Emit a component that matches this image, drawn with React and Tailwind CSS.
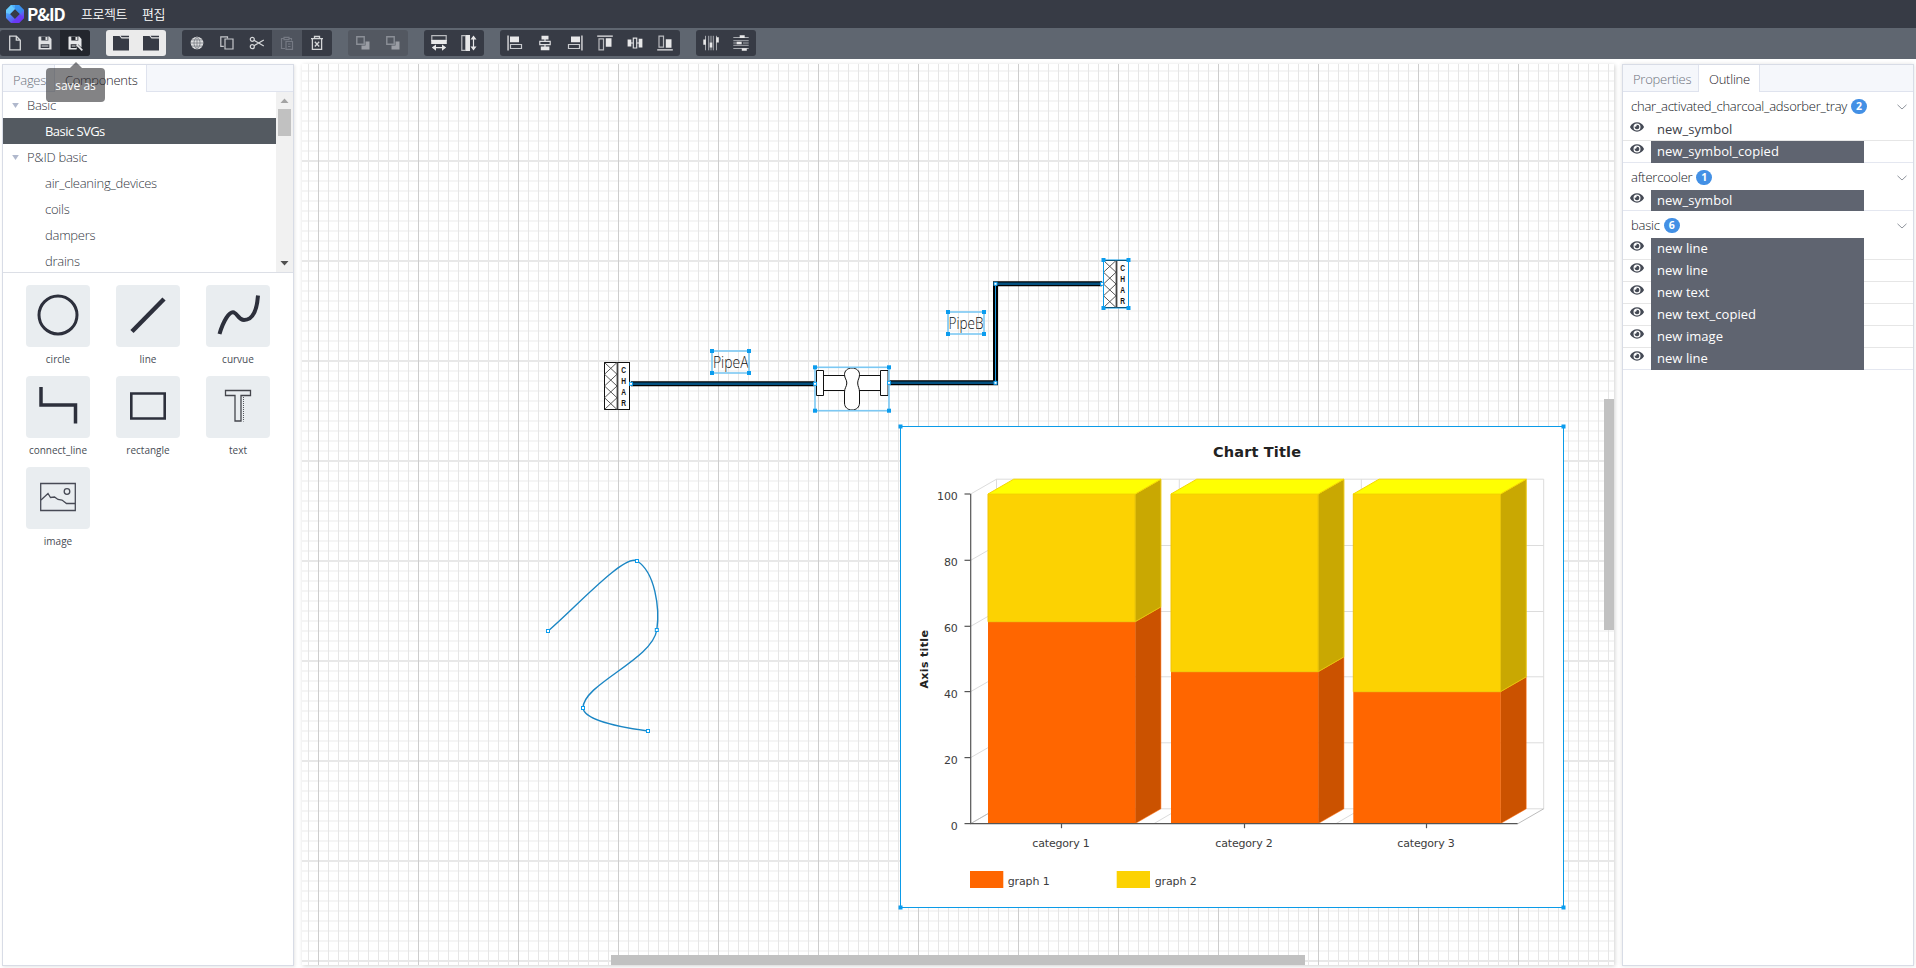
import React from "react";
import { FaEye } from "react-icons/fa";

/* ---------- toolbar icons (drawn on a 16 x 16 grid) ---------- */

const icons = {
  file: (
    <path d="M2.7 1.2h6.6l4 4v9.6H2.7zM9.3 1.2v4h4" fill="none" stroke="#d4d6d8" strokeWidth="1.3" />
  ),
  save: (
    <g fill="#dfe0e2">
      <path d="M2 1.5h10.3L14.5 4v10.500H1.500V2z" />
      <path d="M4.300 1.500h7v4h-7zM3.700 9.300h8.600v3.700H3.700z" fill="#373b45" />
      <path d="M8.500 2h2v3h-2zM4.600 10.600h6.800v1H4.600z" />
    </g>
  ),
  saveAs: (
    <g fill="#e6e7e9">
      <path d="M2 1.500h10.300L14.500 4v8.500L11 9.300l-1.500 5.200H1.500V2z" />
      <path d="M4.300 1.500h7v4h-7zM3.700 9.300h6v3.700H3.700z" fill="#23262d" />
      <path d="M8.500 2h2v3h-2zM4.600 10.600h4v1h-4z" />
      <path d="M9.700 9.700l5.600 5.600" stroke="#e6e7e9" strokeWidth="1.700" fill="none" />
    </g>
  ),
  folder: (
    <path d="M0 1h6.500l2 2.600H16V15.500H0zM7.500 .8H16v1.500H8.700z" fill="#373b45" />
  ),
  globe: (
    <g>
      <circle cx="8" cy="8" r="6.300" fill="#dcdddf" />
      <path
        d="M8 1.500v13M1.500 8h13M2.500 4.900h11M2.500 11.100h11M8 1.500c-4 4-4 9 0 13M8 1.500c4 4 4 9 0 13"
        fill="none"
        stroke="#6d717a"
        strokeWidth=".7"
      />
    </g>
  ),
  copy: (
    <g fill="none" stroke="#c6c8cc" strokeWidth="1.200">
      <path d="M4.800 11.400H1.800V1.800h6.700v1.800" />
      <path d="M6 4h8v10H6z" />
    </g>
  ),
  cut: (
    <g fill="none" stroke="#d4d6d8" strokeWidth="1.200">
      <circle cx="3.300" cy="4.300" r="2" />
      <circle cx="3.300" cy="11.700" r="2" />
      <path d="M5 5.300l9.800 5.700M5 10.700l9.800-5.700" />
    </g>
  ),
  paste: (
    <g fill="none" stroke="#757983" strokeWidth="1.200">
      <path d="M6 13.500H2.500v-10H5M10 3.500h2.500v2M5 2.300h5v2.400H5z" />
      <path d="M7 6.500h6.500v7.800H7zM9 9h2.500M9 11.500h2.500" />
    </g>
  ),
  trash: (
    <g fill="none" stroke="#d4d6d8" strokeWidth="1.300">
      <path d="M2 3.600h12M5.500 3.400V1.500h5v1.900M3.400 4v10.400h9.200V4" />
      <path d="M5.800 6.800l4.400 4.700M10.200 6.800l-4.400 4.700" />
    </g>
  ),
  order: (
    <g>
      <path d="M1.800 1.800h7.400v7.400H1.800z" fill="none" stroke="#8b8f97" strokeWidth="1.400" />
      <path d="M10.500 6.500H14.500v8H6.500v-4h4z" fill="#9b9ea5" />
    </g>
  ),
  sameWidth: (
    <g fill="#e8e8e9">
      <path d="M.8 .6h14.400v4.800H.8z" fill="none" stroke="#b9bbbf" strokeWidth="1.200" />
      <path d="M.2 5h15.600v4H.2zM4 11.900h8v1.400H4z" />
      <path d="M.8 12.600l4.200-3.100v6.200zM15.200 12.600l-4.200-3.100v6.200z" />
    </g>
  ),
  sameHeight: (
    <g fill="#e8e8e9">
      <path d="M.8 .6h4v14.800h-4z" fill="none" stroke="#b9bbbf" strokeWidth="1.200" />
      <path d="M4.800 0h4.200v16H4.800zM11.900 4h1.200v8h-1.200z" />
      <path d="M12.500 .6l-3 4h6zM12.500 15.400l-3-4h6z" />
    </g>
  ),
  alignLeft: (
    <g fill="#e8e8e9">
      <path d="M.4 .5h1.300v15H.4zM3 1.500h9v5.800H3z" />
      <path d="M3.500 9.500h11v4h-11z" fill="none" stroke="#c8cace" strokeWidth="1.200" />
    </g>
  ),
  alignCenter: (
    <g fill="#e8e8e9">
      <path d="M4.500 .8h7v3.700h-7zM7.400 4h1.200v2H7.400zM7.400 10h1.200v2H7.400zM3.800 11.600h8.600v3.700H3.800z" />
      <path d="M2.800 6.300h10.400v3.400H2.800z" fill="none" stroke="#dddee0" strokeWidth="1.200" />
    </g>
  ),
  alignRight: (
    <g fill="#e8e8e9">
      <path d="M14.300 .5h1.300v15h-1.300zM4 1.500h9v5.800H4z" />
      <path d="M1.500 9.500h11v4h-11z" fill="none" stroke="#c8cace" strokeWidth="1.200" />
    </g>
  ),
  alignTop: (
    <g fill="#e8e8e9">
      <path d="M.2 .4h15.600v1.400H.2zM8.800 3.200h5.700v8.500H8.800z" />
      <path d="M2 3.800h4.500v11H2z" fill="none" stroke="#b9bbbf" strokeWidth="1.200" />
    </g>
  ),
  alignMiddle: (
    <g fill="#e8e8e9">
      <path d="M.6 4.500h3.700v7H.6zM4 7.400h2v1.200H4zM10 7.400h2v1.200h-2zM11.700 3.800h3.700v8.600h-3.700z" />
      <path d="M6.300 3.200h3.400v9.800H6.300z" fill="none" stroke="#dddee0" strokeWidth="1.200" />
    </g>
  ),
  alignBottom: (
    <g fill="#e8e8e9">
      <path d="M.2 14.200h15.600v1.400H.2zM8.800 4.300h5.700v8.500H8.800z" />
      <path d="M2 1.200h4.500v11H2z" fill="none" stroke="#b9bbbf" strokeWidth="1.200" />
    </g>
  ),
  distributeH: (
    <g fill="#e8e8e9">
      <path
        d="M2.500 .8v14.500M5.700 .8v14.500M10.300 .8v14.500M13.500 .8v14.500M8 .8v7M8 12v3.300"
        stroke="#a8abb0"
        strokeWidth="1"
      />
      <path d="M.3 4.500h2.600v5.200H.3zM6.700 7.500h2.600v5H6.700zM13.200 2.300h2.600v5.200h-2.600z" />
    </g>
  ),
  distributeV: (
    <g fill="#e8e8e9">
      <path
        d="M.3 2.500h15.400M.3 5.700h15.400M.3 10.300h15.400M.3 13.500h15.400M.3 8h4M10 8h5.700"
        stroke="#a8abb0"
        strokeWidth="1"
      />
      <path d="M6.700 .3h5v2.600h-5zM3.700 6.700h5v2.600h-5zM8.800 13.200h5v2.600h-5z" />
    </g>
  ),
};

const Glyph = ({ name }) => (
  <svg viewBox="0 0 16 16" className="size-4">
    {icons[name]}
  </svg>
);

const groups = [
  { tone: "bg-[#373b45]", items: ["file", "save", "saveAs"] },
  { tone: "bg-[#ebebeb]", items: ["folder", "folder"] },
  { tone: "bg-[#373b45]", items: ["globe", "copy", "cut", "paste", "trash"] },
  { tone: "bg-[#535861]", items: ["order", "order"] },
  { tone: "bg-[#373b45]", items: ["sameWidth", "sameHeight"] },
  {
    tone: "bg-[#373b45]",
    items: ["alignLeft", "alignCenter", "alignRight", "alignTop", "alignMiddle", "alignBottom"],
  },
  { tone: "bg-[#373b45]", items: ["distributeH", "distributeV"] },
];

const buttonTone = { saveAs: "bg-[#23262d]", paste: "bg-[#4f545e]" };

function Toolbar() {
  return (
    <div className="flex h-[31px] shrink-0 items-start gap-4 bg-[#5f6670] pt-0.5">
      {groups.map((g, i) => (
        <div key={i} className={"flex h-[26px] overflow-hidden rounded-[3px] " + g.tone}>
          {g.items.map((n, j) => (
            <button
              key={j}
              className={"flex h-[26px] w-[30px] items-center justify-center " + (buttonTone[n] || "")}
            >
              <Glyph name={n} />
            </button>
          ))}
        </div>
      ))}
    </div>
  );
}

/* ---------- header ---------- */

function Logo() {
  return (
    <svg viewBox="0 0 18 18" className="size-[18px]">
      <defs>
        <linearGradient id="lg" x1="0" y1="0" x2=".6" y2="1">
          <stop offset="0" stopColor="#56c8ff" />
          <stop offset=".5" stopColor="#4a92f5" />
          <stop offset="1" stopColor="#6a35f2" />
        </linearGradient>
      </defs>
      <path d="M5 0h8l5 5v8l-5 5H5l-5-5V5zM9 4L4 9l5 5 5-5z" fillRule="evenodd" fill="url(#lg)" />
      <path d="M5 0L0 5v3l4 1 5-5z" fill="#6fd6ff" opacity=".7" />
      <path d="M18 5l-5-5H9v4l5 5z" fill="#2f8be8" opacity=".7" />
      <path d="M18 13l-5 5H5l4-4 5-5z" fill="#6b35f5" opacity=".75" />
    </svg>
  );
}

function Header() {
  return (
    <header className="flex h-7 shrink-0 items-center bg-[#373b45] pl-1.5 font-['Noto_Sans_CJK_KR',sans-serif] text-white">
      <Logo />
      <span className="ml-[3px] w-[38px] text-[17px] leading-7 font-bold tracking-[-1px]">P&amp;ID</span>
      <span className="ml-4 w-[46px] text-[13px] leading-7 font-[350] tracking-[-0.5px] whitespace-nowrap">
        프로젝트
      </span>
      <span className="ml-[15px] text-[13px] leading-7 font-[350] tracking-[-0.5px] whitespace-nowrap">편집</span>
    </header>
  );
}

/* ---------- left panel ---------- */

const tree = [
  { label: "Basic", parent: true },
  { label: "Basic SVGs", active: true },
  { label: "P&ID basic", parent: true },
  { label: "air_cleaning_devices" },
  { label: "coils" },
  { label: "dampers" },
  { label: "drains" },
];

const shapes = {
  circle: <circle cx="32" cy="30" r="19" fill="none" stroke="#2d303c" strokeWidth="3" />,
  line: <path d="M16 46.500L48 14" stroke="#2d303c" strokeWidth="4.500" />,
  curvue: (
    <path
      d="M13.500 49C17 37 23 26 28 27.500C32 29 32.500 35 38 35C47 35 51 24 52 10.500"
      fill="none"
      stroke="#2d303c"
      strokeWidth="4"
    />
  ),
  connect_line: <path d="M15 11v18h34.500v18.500" fill="none" stroke="#2d303c" strokeWidth="3.500" />,
  rectangle: <path d="M15.300 17.500h33.400v25H15.300z" fill="none" stroke="#2d303c" strokeWidth="2.600" />,
  text: (
    <g fill="none" stroke="#44464c">
      <path d="M19.500 14.500h25v5h-9.500v25.500h-6V19.500h-9.500z" strokeWidth="1.300" />
      <path d="M37.500 21v24.500" strokeDasharray="1 1" strokeWidth=".9" />
    </g>
  ),
  image: (
    <g fill="none" stroke="#474a55" strokeWidth="1.300">
      <path d="M14.700 16.500h34.600v27H14.700z" />
      <circle cx="41" cy="24.500" r="2.800" />
      <path d="M15 33l7-6.500 2.500 4 4-.5 3.500 2.500 4 .5 4.500 3.500h8.500" />
    </g>
  ),
};

function LeftPanel() {
  return (
    <aside className="flex h-[902px] w-[292px] flex-col border border-[#d8dce6] bg-white shadow-[1px_1px_3px_rgba(0,0,0,0.1)]">
      <div className="flex h-[27px] shrink-0 border-b border-[#dfe3ee] bg-[#f5f7fb] text-[13px] leading-[30px] tracking-[-0.3px]">
        <span className="w-[52px] border-r border-[#dfe3ee] pl-2.5 text-[#6d727c]">Pages</span>
        <span className="h-[27px] w-[92px] border-r border-[#dfe3ee] bg-white pl-[10px] text-[#1c2028]">
          Components
        </span>
      </div>
      <div className="flex h-[181px] shrink-0 overflow-hidden border-b border-[#dcdfe6]">
        <div className="w-[273px] text-[13px] leading-[26px] tracking-[-0.25px] text-[#34383f]">
          {tree.map((n) => (
            <div
              key={n.label}
              className={
                "flex h-[26px] items-center " +
                (n.parent ? "pl-[9px]" : "pl-[42px]") +
                (n.active ? " bg-[#545a61] font-normal tracking-[-0.55px] text-white" : "")
              }
            >
              {n.parent && (
                <svg viewBox="0 0 8 6" className="mr-2 h-[5px] w-[7px]">
                  <path d="M0 0h8L4 6z" fill="#b0b8cc" />
                </svg>
              )}
              {n.label}
            </div>
          ))}
        </div>
        <div className="flex w-[17px] flex-col items-center bg-[#f1f1f1]">
          <svg viewBox="0 0 17 17" className="h-[17px] w-[17px] shrink-0">
            <path d="M4.500 11h8L8.500 6.500z" fill="#a3a3a3" />
          </svg>
          <div className="h-[27px] w-[13px] bg-[#c1c1c1]" />
          <svg viewBox="0 0 17 17" className="mt-auto h-[17px] w-[17px] shrink-0">
            <path d="M4.500 6h8L8.500 10.500z" fill="#505050" />
          </svg>
        </div>
      </div>
      <div className="grid grid-cols-[repeat(3,64px)] gap-x-[26px] pt-3 pl-[23px]">
        {Object.keys(shapes).map((k) => (
          <div key={k} className="flex h-[91px] flex-col items-center">
            <svg viewBox="0 0 64 62" className="h-[62px] w-16 rounded bg-[#e9edf0]">
              {shapes[k]}
            </svg>
            <span className="mt-[3px] text-[10px] leading-[18px] font-normal text-[#474c55]">{k}</span>
          </div>
        ))}
      </div>
    </aside>
  );
}

/* ---------- canvas ---------- */

const Handles = ({ x, y, w, h, soft }) => (
  <g>
    <rect
      x={x}
      y={y}
      width={w}
      height={h}
      fill="none"
      stroke={soft ? "#7cc8f3" : "#0b9be8"}
      strokeWidth={soft ? 1.6 : 1}
    />
    {[
      [x, y],
      [x + w, y],
      [x, y + h],
      [x + w, y + h],
    ].map(([a, b], i) => (
      <rect key={i} x={a - 2} y={b - 2} width="4" height="4" fill="#0b9cee" />
    ))}
  </g>
);

const Node = ({ x, y }) => (
  <rect x={x - 1.5} y={y - 1.5} width="3" height="3" fill="#fff" stroke="#0b9cee" strokeWidth="1" />
);

function Char({ x, y, w = 25, h = 47 }) {
  const q = h / 4;
  return (
    <g>
      <rect x={x} y={y} width={w} height={h} fill="#fff" stroke="#111" />
      {[0, 1, 2, 3].map((i) => (
        <path
          key={i}
          d={`M${x} ${y + i * q}l12.500 ${q}M${x + 12.5} ${y + i * q}l-12.500 ${q}`}
          stroke="#444"
          strokeWidth=".9"
        />
      ))}
      <path d={`M${x + 13} ${y}v${h}`} stroke="#444" strokeWidth="1.800" />
      {["C", "H", "A", "R"].map((c, i) => (
        <text
          key={c}
          x={x + 19.2}
          y={y + 10.9 + i * 10.8}
          fontSize="9.500"
          fontWeight="700"
          fill="#111"
          textAnchor="middle"
          textLength="4.800"
          lengthAdjust="spacingAndGlyphs"
          fontFamily="Liberation Sans, sans-serif"
        >
          {c}
        </text>
      ))}
    </g>
  );
}

const ticks = [
  [100, 494],
  [80, 560.3],
  [60, 626.3],
  [40, 691.6],
  [20, 757.6],
  [0, 823.6],
];

const bars = [
  { x: 988, split: 621.7, label: "category 1", mid: 1061.3 },
  { x: 1171, split: 671.7, label: "category 2", mid: 1244.3 },
  { x: 1353.3, split: 691.7, label: "category 3", mid: 1426.3 },
];

function Chart() {
  const D = 25.7;
  const H = 14.8;
  const W = 147.2;
  return (
    <g fontFamily="DejaVu Sans, sans-serif" fontWeight="400" fill="#3c3c3c">
      <rect x="900.500" y="426.500" width="663" height="481" fill="#fff" />
      <text x="1257" y="457" fontSize="14.500" fontWeight="700" fill="#222" textAnchor="middle" textLength="88">
        Chart Title
      </text>
      <g stroke="#dcdcdc" fill="none">
        {ticks.map(([v, y]) => (
          <path key={v} d={`M970.700 ${y}L996.500 ${y - H}H1543.700`} />
        ))}
        <path d="M996.500 479.200V808.800M1179.300 479.200V808.800M1361.300 479.200V808.800M1543.700 479.200V808.800" />
        <path d="M1154 823.600l25.300-14.800M1336 823.600l25.300-14.800" />
        <path d="M1518 823.600l25.700-14.800M970.700 823.600l25.700-14.800" stroke="#bdbdbd" />
      </g>
      {bars.map(({ x, split }) => (
        <g key={x} strokeWidth="1">
          <path d={`M${x} ${split}H${x + W}V823.600H${x}z`} fill="#ff6600" />
          <path
            d={`M${x + W} ${split}l${D} ${-H}V808.800l${-D} ${H}z`}
            fill="#cb5200"
            stroke="#ff6600"
            strokeOpacity=".5"
          />
          <path d={`M${x} 494H${x + W}V${split}H${x}z`} fill="#fcd202" stroke="#f0c404" />
          <path d={`M${x + W} 494l${D} ${-H}V${split - H}l${-D} ${H}z`} fill="#c9a802" stroke="#e8c40a" />
          <path d={`M${x} 494l${D} ${-H}H${x + W + D}l${-D} ${H}z`} fill="#ffff02" stroke="#f5d800" />
        </g>
      ))}
      <g stroke="#555" strokeWidth="1.200" fill="none">
        <path d="M970.700 494V823.600H1517.700" />
        {ticks.map(([v, y]) => (
          <path key={v} d={`M964.500 ${y}h6`} />
        ))}
        {bars.map((b) => (
          <path key={b.mid} d={`M${b.mid + 0.2} 823.600v4.600`} />
        ))}
      </g>
      {ticks.map(([v, y]) => (
        <text key={v} x="957.500" y={y + 6} fontSize="11" textAnchor="end" letterSpacing="-.2">
          {v}
        </text>
      ))}
      {bars.map((b) => (
        <text key={b.label} x={b.mid - 0.2} y="847.400" fontSize="11" textAnchor="middle" textLength="57.500">
          {b.label}
        </text>
      ))}
      <text
        transform="translate(928.300 659.300) rotate(-90)"
        fontSize="11"
        fontWeight="700"
        fill="#222"
        textAnchor="middle"
        textLength="58.500"
      >
        Axis title
      </text>
      <rect x="970" y="871" width="33.300" height="17" fill="#ff6600" />
      <rect x="1116.700" y="871" width="33.300" height="17" fill="#fcd202" />
      <text x="1007.700" y="885" fontSize="11" textLength="42">
        graph 1
      </text>
      <text x="1154.700" y="885" fontSize="11" textLength="42">
        graph 2
      </text>
    </g>
  );
}

function Canvas() {
  return (
    <main className="flex flex-col bg-white shadow-[1px_1px_4px_rgba(0,0,0,0.18)]">
      <svg viewBox="302 64 1312 901" className="h-[901px] w-[1312px]">
        <defs>
          <pattern id="minor" x="318" y="61" width="10" height="10" patternUnits="userSpaceOnUse">
            <path d="M0 9h10v1H0zM0 0h10v1H0z" fill="#f5f5f5" />
            <path d="M0 0h1v10H0z" fill="#e6e6e6" />
          </pattern>
          <pattern id="major" x="318" y="61" width="100" height="100" patternUnits="userSpaceOnUse">
            <path d="M0 99h100v1H0zM0 0h100v1H0z" fill="#e8e8e8" />
            <path d="M0 0h1v100H0z" fill="#cdcdcd" />
          </pattern>
        </defs>
        <rect x="302" y="64" width="1312" height="901" fill="#fff" />
        <rect x="302" y="64" width="1312" height="901" fill="url(#minor)" />
        <rect x="302" y="64" width="1312" height="901" fill="url(#major)" />

        {/* pipes */}
        <g fill="none">
          <path d="M631 383.800H815" stroke="#000" strokeWidth="5" />
          <path d="M632 383.800H814" stroke="#04507f" strokeWidth="2.600" />
          <path d="M889 382.800H995.500V283.800H1102" stroke="#000" strokeWidth="5" />
          <path d="M890 382.800H995M996 283.800H1102" stroke="#04507f" strokeWidth="2.600" />
          <path d="M995.500 382.800V283.800" stroke="#1c9be0" strokeWidth="1" />
        </g>

        {/* charcoal trays */}
        <Char x={604.5} y={362.5} />
        <Char x={1103.5} y={260.5} />
        <Handles x={1103.5} y={260} w={25} h={48} />

        {/* aftercooler */}
        <g stroke="#111" fill="#fff">
          <path d="M823.500 375.500h57v15h-57z" />
          <path d="M816.500 370.500h7v25h-7zM880.500 370.500h7.500v25h-7.500z" />
          <path d="M852 368c4.500 0 7.500 3 7.500 6.500c0 4-1.800 5-1.800 8.500s1.800 5 1.800 9v11c0 4-3 7-7.500 7s-7.500-3-7.500-7v-11c0-4 2.300-5.500 2.300-9s-2.300-4.500-2.300-8.500c0-3.500 3-6.500 7.500-6.500z" />
        </g>
        <Handles x={815} y={367.3} w={74} h={43.4} soft />

        {/* labels */}
        <g fontFamily="Open Sans, sans-serif" fontWeight="350" fontSize="16.500" fill="#111">
          <text x="713" y="367.700" textLength="35.500" lengthAdjust="spacingAndGlyphs">
            PipeA
          </text>
          <text x="948.500" y="328.700" textLength="35" lengthAdjust="spacingAndGlyphs">
            PipeB
          </text>
        </g>
        <Handles x={712} y={351} w={37} h={22} soft />
        <Handles x={948} y={312} w={36} h={22} soft />

        <Node x={631} y={383.8} />
        <Node x={815} y={383.8} />
        <Node x={889} y={382.8} />
        <Node x={995.5} y={382.8} />
        <Node x={995.5} y={283.8} />
        <Node x={1102} y={283.8} />

        {/* free curve */}
        <path
          d="M548 631C575 608 625 553 637 561C655 572 660 608 656.800 630C652 660 583 684 583 708C584 718 610 726 648 731"
          fill="none"
          stroke="#1b86c4"
          strokeWidth="1.400"
        />
        <Node x={548} y={631} />
        <Node x={637} y={561} />
        <Node x={656.8} y={630} />
        <Node x={583} y={708} />
        <Node x={648} y={731} />

        <Chart />
        <Handles x={900.5} y={426.5} w={663} h={481} />

        {/* scroll thumbs */}
        <rect x="611" y="955" width="694" height="10" fill="#c1c1c1" />
        <rect x="1604" y="399" width="10" height="231" fill="#c1c1c1" />
      </svg>
    </main>
  );
}

/* ---------- right panel ---------- */

const outline = [
  {
    name: "char_activated_charcoal_adsorber_tray",
    rows: [["new_symbol", false], ["new_symbol_copied", true]],
  },
  { name: "aftercooler", rows: [["new_symbol", true]] },
  {
    name: "basic",
    rows: [
      ["new line", true],
      ["new line", true],
      ["new text", true],
      ["new text_copied", true],
      ["new image", true],
      ["new line", true],
    ],
  },
];

function RightPanel() {
  return (
    <aside className="flex h-[902px] w-[292px] flex-col border border-[#d8dce6] bg-white text-[13px] shadow-[0_0_4px_rgba(0,0,0,0.12)]">
      <div className="flex h-[27px] shrink-0 border-b border-[#dfe3ee] bg-[#f5f7fb] leading-[29px] tracking-[-0.25px]">
        <span className="w-[76px] border-r border-[#dfe3ee] pl-2.5 text-[#6d727c]">Properties</span>
        <span className="h-[27px] w-[61px] border-r border-[#dfe3ee] bg-white pl-2.5 text-[#1c2028]">
          Outline
        </span>
      </div>
      {outline.map((g) => (
        <section key={g.name} className="border-b border-[#e4e7f0]">
          <div className="flex h-[27px] items-center pt-0.5 pr-[6px] pl-2">
            <span className="tracking-[-0.23px] text-[#14171d]">{g.name}</span>
            <span className="ml-1 flex h-[15px] w-4 items-center justify-center rounded-full bg-[#4390e5] text-[10.5px] leading-none font-bold text-white">
              {g.rows.length}
            </span>
            <svg viewBox="0 0 10 6" className="ml-auto h-1.5 w-2.5">
              <path d="M.5 .8L5 5L9.500 .8" fill="none" stroke="#8f949c" />
            </svg>
          </div>
          <div className="divide-y divide-[#e6e6e6]">
            {g.rows.map(([label, on], i) => (
              <div key={i} className="flex h-[22px] pl-[7px] last:h-[21px] only:h-5">
                <FaEye className="mt-[1px] size-[14px] shrink-0 text-[#454a55]" />
                <span
                  className={
                    "ml-[7px] h-full w-[213px] pl-1.5 " +
                    (on
                      ? "bg-[#5f6470] leading-5 font-normal tracking-[0.05px] text-white shadow-[0_1px_0_#5f6470]"
                      : "leading-[21px] font-normal tracking-[0.05px] text-[#3c4048]")
                  }
                >
                  {label}
                </span>
              </div>
            ))}
          </div>
        </section>
      ))}
    </aside>
  );
}

export default function App() {
  return (
    <div className="relative flex h-[968px] w-[1916px] flex-col overflow-hidden bg-white font-['Open_Sans',sans-serif] font-[350]">
      <Header />
      <Toolbar />
      <div className="flex items-start gap-2 pt-[5px] pl-0.5">
        <LeftPanel />
        <Canvas />
        <RightPanel />
      </div>
      <div className="absolute top-[62px] left-[46px] flex w-[59px] flex-col items-center">
        <div className="h-0 w-0 border-x-[6px] border-b-[6px] border-x-transparent border-b-[#303133]/60" />
        <div className="h-[34px] w-full rounded bg-[#303133]/60 text-center text-[12px] leading-[36px] font-medium text-white">
          save as
        </div>
      </div>
    </div>
  );
}
